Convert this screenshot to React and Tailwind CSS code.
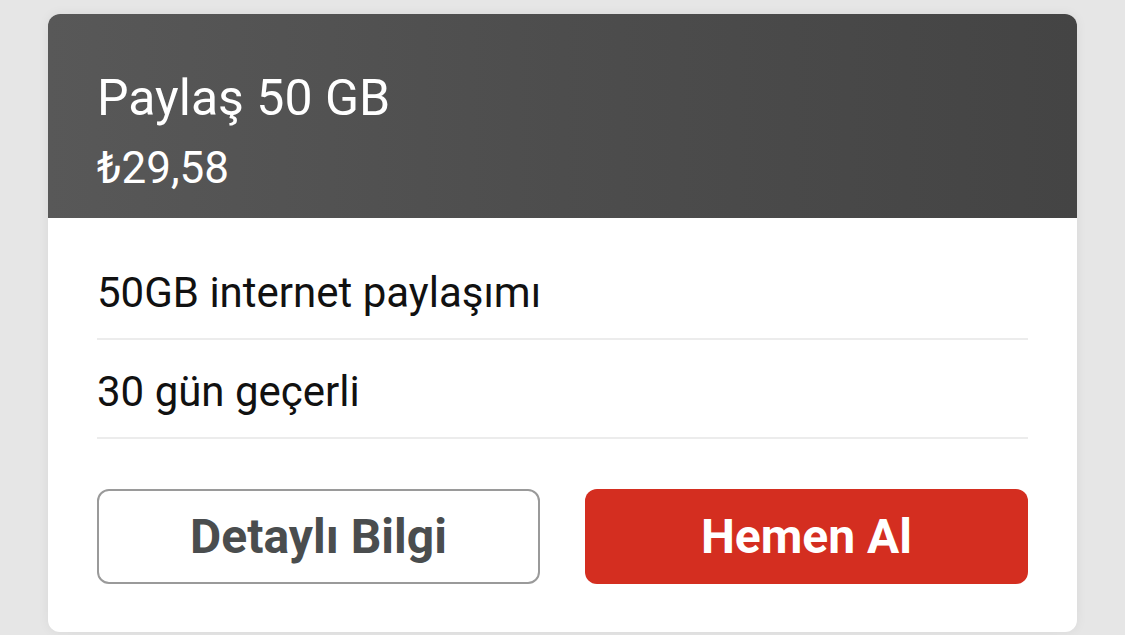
import React from 'react';

export default function App() {
  return (
    <div className="min-h-screen bg-[#e6e6e6] px-[48px] pt-[14px] font-['Roboto',sans-serif]">
      <div className="overflow-hidden rounded-[12px] bg-white shadow-[0_0_12px_rgba(0,0,0,0.06)]">
        <div className="h-[204px] bg-[linear-gradient(90deg,#585858_0%,#4d4d4d_50%,#444444_100%)] px-[49px] pt-[54px] text-white">
          <h1 className="text-[50px] leading-[60px]">Paylaş 50 GB</h1>
          <div className="mt-[16px] text-[44px] leading-[48px]">₺29,58</div>
        </div>
        <div className="px-[49px] pb-[48px] text-[#111]">
          <div className="flex h-[122px] items-end border-b-2 border-[#ececec] pb-[23px] text-[42px] leading-[44px]">
            50GB internet paylaşımı
          </div>
          <div className="flex h-[99px] items-end border-b-2 border-[#ececec] pb-[23px] text-[42px] leading-[44px]">
            30 gün geçerli
          </div>
          <div className="mt-[50px] grid grid-cols-2 gap-[45px]">
            <button className="flex h-[95px] items-center justify-center rounded-[12px] border-2 border-[#9a9a9a] bg-white text-[48px] font-bold text-[#4a4d4e]">
              Detaylı Bilgi
            </button>
            <button className="flex h-[95px] items-center justify-center rounded-[12px] bg-[#d42e20] text-[48px] font-bold text-white">
              Hemen Al
            </button>
          </div>
        </div>
      </div>
    </div>
  );
}
